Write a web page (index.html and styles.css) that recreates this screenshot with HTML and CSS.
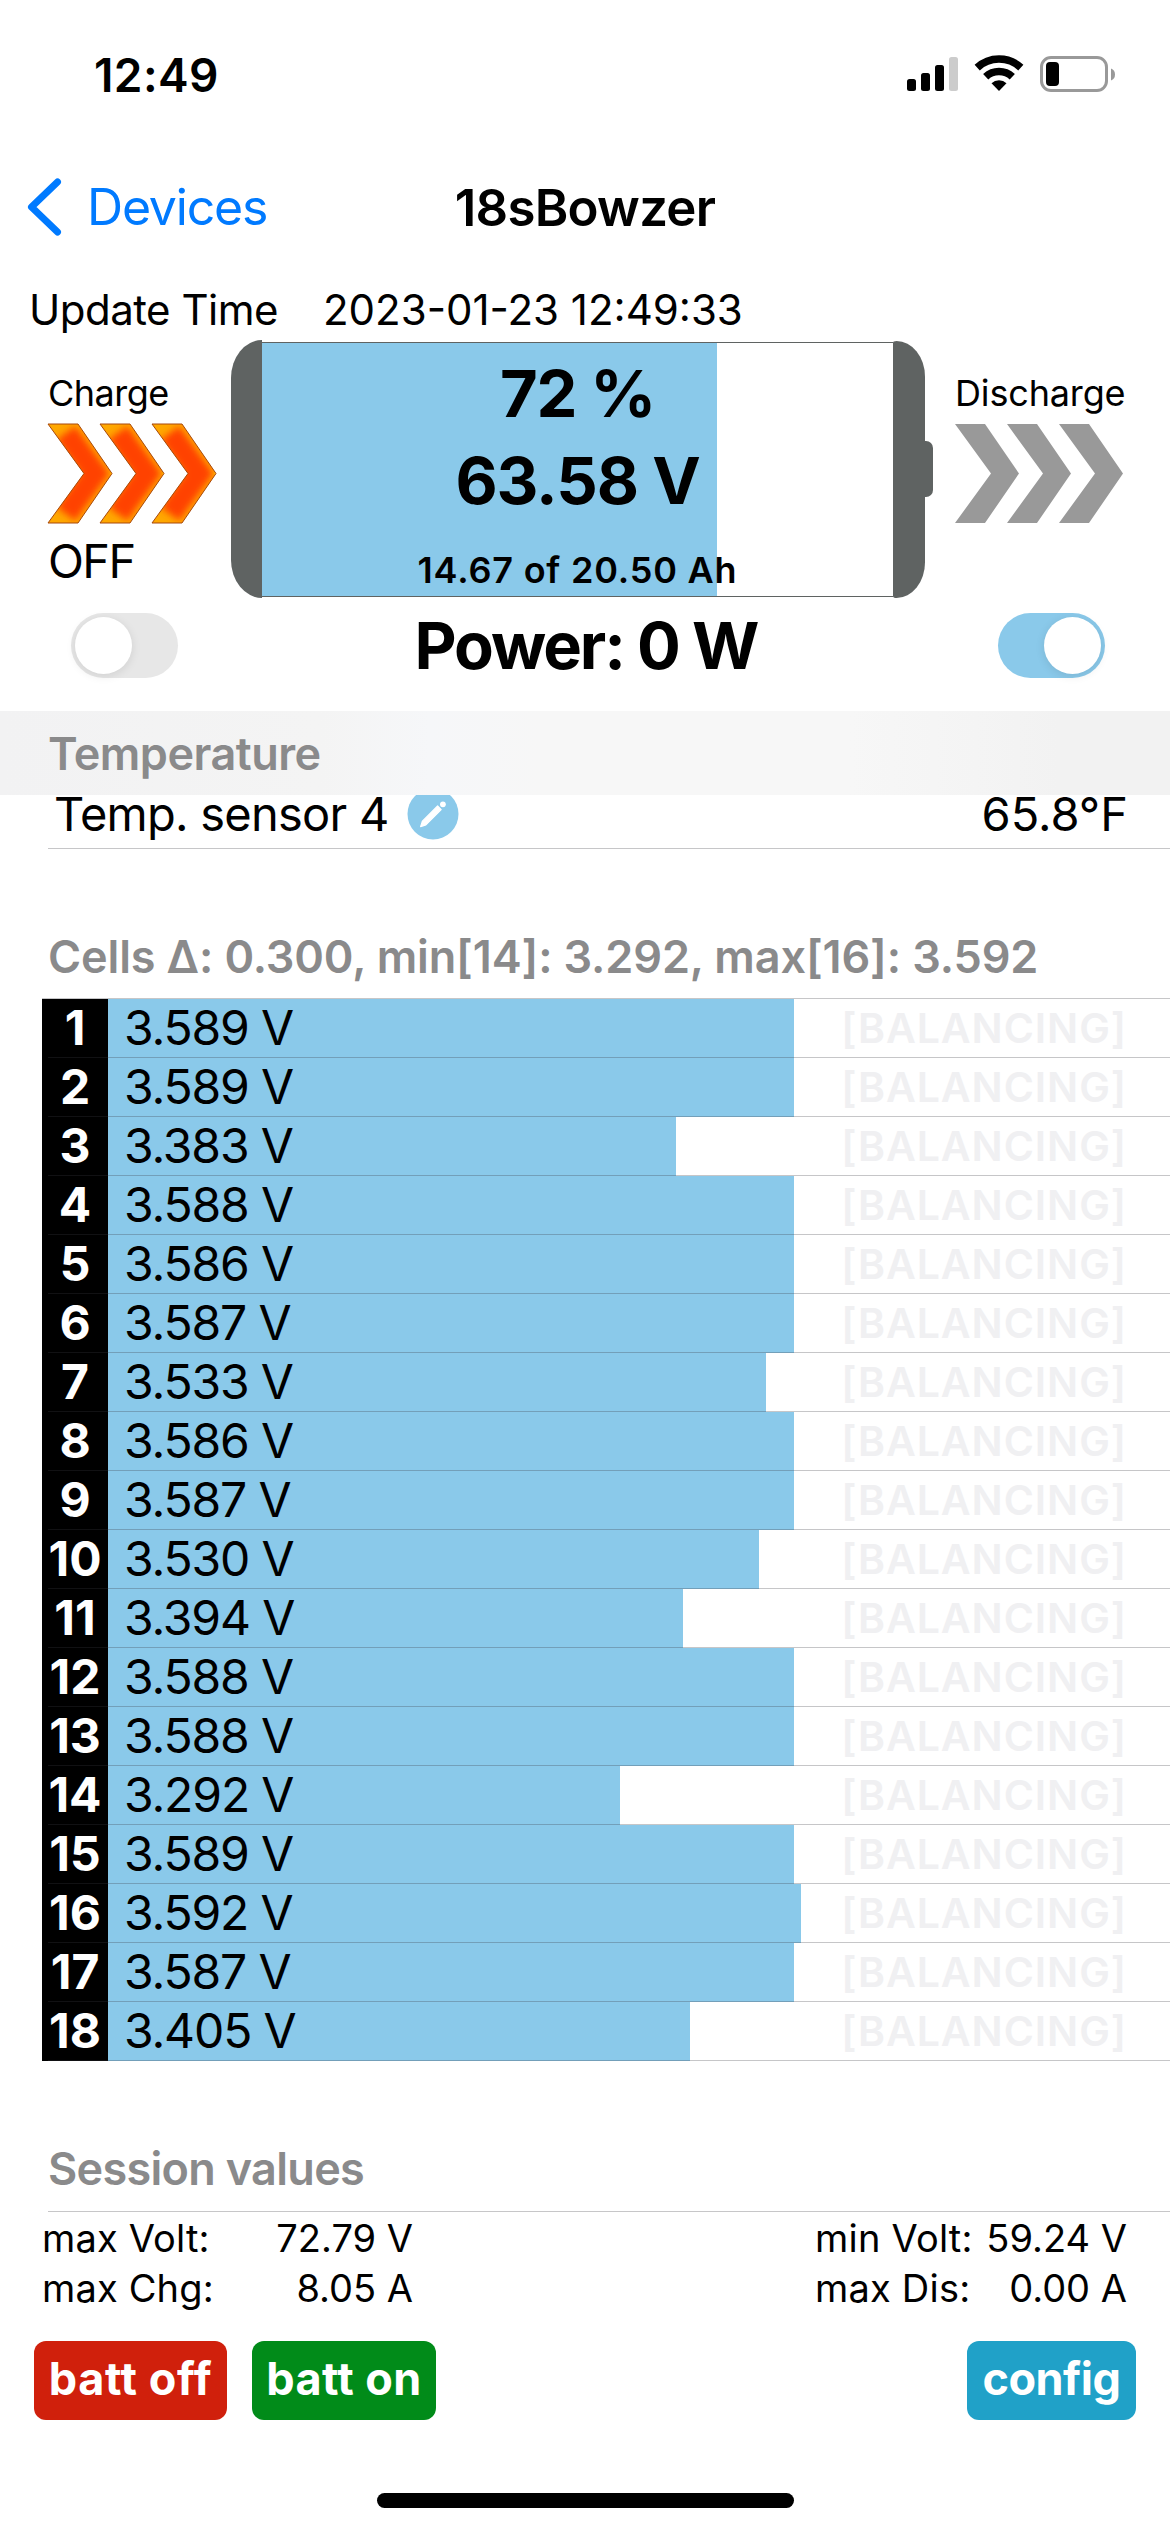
FILE: index.html
```
<!DOCTYPE html>
<html lang="en">
<head>
	<meta charset="UTF-8">
	<title>18sBowzer</title>
	<link rel="stylesheet" href="styles.css">
	<script>
		window.onload=function(){
			// [voltage, bar width]
			var cells=[
				['3.589',686],['3.589',686],['3.383',568],['3.588',686],['3.586',686],['3.587',686],
				['3.533',658],['3.586',686],['3.587',686],['3.530',651],['3.394',575],['3.588',686],
				['3.588',686],['3.292',512],['3.589',686],['3.592',693],['3.587',686],['3.405',582]
			];
			var html='';
			for(var i=0;i<cells.length;i++){
				html+='<li class="cell"><b class="num">'+(i+1)+'</b>'
					+'<span class="bar" style="width:'+cells[i][1]+'px">'+cells[i][0]+' V</span>'
					+'<span class="balancing">[BALANCING]</span></li>';
			}
			document.getElementById('cells').innerHTML=html;
		}
	</script>
</head>
<body>
	<div class="status">
		<span class="clock">12:49</span>
		<svg class="status-icons" width="220" height="50" viewBox="900 50 220 50">
			<rect x="907" y="79" width="9" height="12" rx="2.5"/>
			<rect x="921" y="73" width="9" height="18" rx="2.5"/>
			<rect x="935" y="65" width="9" height="26" rx="2.5"/>
			<rect x="949" y="57" width="9" height="34" rx="2.5" fill="#ccc"/>
			<path d="M977.2 67.6A32 32 0 0 1 1020.8 67.6M985.7 76.7A19.5 19.5 0 0 1 1012.3 76.7" fill="none" stroke="#000" stroke-width="7.6"/>
			<path d="M999 91L991.5 83.2A11 11 0 0 1 1006.5 83.2Z"/>
			<rect x="1041.5" y="57.5" width="65" height="33" rx="9.5" fill="none" stroke="#999" stroke-width="3"/>
			<rect x="1046" y="62" width="13" height="24" rx="4"/>
			<path d="M1111 68.5Q1115 70 1115 74.5Q1115 79 1111 80.5Z" fill="#999"/>
		</svg>
	</div>
	<div class="nav">
		<a href="#" class="back">
			<svg width="40" height="60" viewBox="0 0 40 60"><path d="M32.5 5L6.5 30L32.5 55" fill="none" stroke="#007aff" stroke-width="7" stroke-linecap="round" stroke-linejoin="round"/></svg>
			<span>Devices</span>
		</a>
		<h1>18sBowzer</h1>
	</div>
	<div class="update">
		<span class="update-label">Update Time</span>
		<span class="update-value">2023-01-23 12:49:33</span>
	</div>

	<div class="panel">
		<div class="flow charge">
			<span class="flow-name">Charge</span>
			<svg class="arrows" width="170" height="101" viewBox="-1 -1 170 101">
				<defs>
					<path id="arrow" d="M0 0H30L64 49.5L30 99H0L36 49.5Z"/>
					<clipPath id="clip"><use href="#arrow"/></clipPath>
					<filter id="glow" x="-50%" y="-50%" width="200%" height="200%"><feGaussianBlur stdDeviation="3.5"/></filter>
					<g id="hot">
						<use href="#arrow" fill="#ffa800"/>
						<g clip-path="url(#clip)"><path d="M18 9L47 49.5L18 90" fill="none" stroke="#ff4200" stroke-width="23" filter="url(#glow)"/></g>
						<use href="#arrow" fill="none" stroke="#a8480c" stroke-width="1"/>
					</g>
				</defs>
				<use href="#hot"/>
				<use href="#hot" x="52"/>
				<use href="#hot" x="104"/>
			</svg>
			<span class="flow-state">OFF</span>
		</div>
		<div class="battery">
			<div class="cap-left"></div>
			<div class="body">
				<div class="percent">72 %</div>
				<div class="volts">63.58 V</div>
				<div class="capacity">14.67 of 20.50 Ah</div>
			</div>
			<div class="cap-right"></div>
			<div class="nub"></div>
		</div>
		<div class="flow discharge">
			<span class="flow-name">Discharge</span>
			<svg class="arrows" width="170" height="101" viewBox="-1 -1 170 101" fill="#999">
				<use href="#arrow"/>
				<use href="#arrow" x="52"/>
				<use href="#arrow" x="104"/>
			</svg>
		</div>
	</div>

	<div class="power">
		<span class="toggle"></span>
		<strong>Power: 0 W</strong>
		<span class="toggle on"></span>
	</div>

	<h2 class="bar-title">Temperature</h2>
	<div class="temp-row">
		<span class="temp-name">Temp. sensor 4</span>
		<svg class="edit" width="52" height="52" viewBox="0 0 52 52">
			<circle cx="26" cy="26" r="25.5" fill="#8ac9ea"/>
			<path d="M13.6 38.6L15.4 33.2L30.6 18L34.2 21.6L18.9 36.9Z" fill="#fff" stroke="#fff" stroke-width="1.2" stroke-linejoin="round"/>
			<circle cx="35.9" cy="16.3" r="2.9" fill="#fff"/>
		</svg>
		<span class="temp-value">65.8°F</span>
	</div>

	<h2 class="cells-title">Cells Δ: 0.300, min[14]: 3.292, max[16]: 3.592</h2>
	<ul id="cells" class="cells"></ul>

	<h2 class="session-title">Session values</h2>
	<div class="session">
		<span>max Volt:</span><span class="val">72.79 V</span><span class="second">min Volt:</span><span class="val">59.24 V</span>
		<span>max Chg:</span><span class="val">8.05 A</span><span class="second">max Dis:</span><span class="val">0.00 A</span>
	</div>
	<div class="buttons">
		<a href="#" class="btn off">batt off</a>
		<a href="#" class="btn turn-on">batt on</a>
		<a href="#" class="btn config">config</a>
	</div>
	<div class="home"></div>
</body>
</html>
```
FILE: styles.css
```
*{
	margin: 0;
	padding: 0;
	box-sizing: border-box;
	text-decoration: none;
}
body{
	width: 1170px;
	height: 2532px;
	overflow: hidden;
	background-color: #fff;
	color: #000;
	font-family: Inter, "Liberation Sans", sans-serif;
	white-space: nowrap;
}
svg{
	display: block;
	flex: none;
}
.status{
	display: flex;
	justify-content: space-between;
	align-items: center;
	height: 149px;
	padding: 0 50px 0 94px;
}
.clock{
	font-size: 46px;
	font-weight: 600;
	letter-spacing: .4px;
}
.nav{
	display: grid;
	grid-template-columns: 1fr auto 1fr;
	align-items: center;
	height: 116px;
	padding-left: 25px;
	padding-right: 25px;
}
.back{
	display: flex;
	align-items: center;
	gap: 22px;
	font-size: 50px;
	letter-spacing: -1.2px;
	color: #007aff;
}
h1{
	font-size: 51px;
	font-weight: 600;
	letter-spacing: -.75px;
}
.update{
	display: flex;
	height: 75px;
	padding: 15px 0 0 29px;
	font-size: 42px;
	line-height: 60px;
}
.update-label{
	width: 294px;
	letter-spacing: -.5px;
}

/* charge / battery / discharge */
.panel{
	display: flex;
	height: 258px;
}
.flow{
	padding-top: 31px;
}
.flow-name{
	display: block;
	font-size: 36px;
	line-height: 44px;
	letter-spacing: -.5px;
}
.arrows{
	margin-top: 8px;
}
.charge{
	width: 231px;
	padding-left: 48px;
}
.charge .arrows, .discharge .arrows{
	margin-left: -1px;
}
.discharge{
	padding-left: 22px;
}
.discharge .flow-name{
	letter-spacing: -.15px;
}
.flow-state{
	display: block;
	margin-top: 9px;
	font-size: 47px;
	line-height: 56px;
	letter-spacing: -1.6px;
}
.battery{
	display: flex;
	width: 702px;
	align-items: center;
}
.cap-left{
	width: 31px;
	height: 258px;
	background-color: #5f6362;
	border-radius: 31px 0 0 31px / 38px 0 0 38px;
}
.cap-right{
	width: 32px;
	height: 257px;
	background-color: #5f6362;
	border-radius: 4px 32px 32px 4px / 2px 40px 40px 2px;
}
.nub{
	width: 8px;
	height: 56px;
	background-color: #5f6362;
	border-radius: 0 7px 7px 0;
}
.body{
	width: 631px;
	height: 255px;
	padding-top: 8px;
	border: 1px solid #5f6362;
	border-width: 1px 0;
	background: linear-gradient(to right, #8ac9ea 455px, #fff 455px);
	font-weight: 700;
	text-align: center;
}
.percent{
	font-size: 65px;
	line-height: 86px;
	letter-spacing: -1.3px;
}
.volts{
	font-size: 65px;
	line-height: 87px;
	letter-spacing: -1.1px;
}
.capacity{
	margin-top: 24px;
	font-size: 36px;
	font-weight: 600;
	line-height: 44px;
	letter-spacing: .8px;
}
.power{
	display: flex;
	justify-content: space-between;
	height: 113px;
	padding: 15px 65px 0 71px;
}
.power strong{
	margin-right: 4px;
	font-size: 65px;
	line-height: 65px;
	letter-spacing: -2.1px;
}
.toggle{
	width: 107px;
	height: 65px;
	padding: 4px;
	border-radius: 33px;
	background-color: #e7e7e7;
}
.toggle:before{
	content: "";
	display: block;
	width: 57px;
	height: 57px;
	border-radius: 50%;
	background-color: #fff;
	box-shadow: 0 2px 10px rgba(0,0,0,.1);
}
.toggle.on{
	background-color: #8ac9ea;
}
.toggle.on:before{
	margin-left: auto;
}

/* lists */
h2{
	padding-left: 48px;
	font-size: 45px;
	font-weight: 600;
	color: #8a8a8b;
}
.bar-title{
	position: relative;
	z-index: 1;
	height: 84px;
	line-height: 85px;
	letter-spacing: -.5px;
	background: linear-gradient(to right, #f2f2f3 0, #f4f4f4 320px, #f6f7f9 430px, #f7f7f7 540px, #f7f7f7 850px, #f2f2f2 1060px);
}
.temp-row{
	display: flex;
	align-items: center;
	height: 54px;
	margin-left: 48px;
	padding: 0 42px 15px 6px;
	border-bottom: 1px solid #c6c6c8;
	font-size: 47px;
	line-height: 38px;
}
.temp-name{
	letter-spacing: -.75px;
}
.edit{
	margin-left: 18px;
}
.temp-value{
	margin-left: auto;
}
.cells-title{
	height: 149px;
	padding-top: 78px;
	line-height: 60px;
	letter-spacing: -.13px;
}
.cells{
	margin-left: 42px;
	border-top: 1px solid #c6c6c8;
	list-style: none;
}
.cell{
	position: relative;
	display: flex;
	height: 59px;
	line-height: 58px;
	font-size: 48px;
}
/* separator runs over the number and the bar */
.cell:after{
	content: "";
	position: absolute;
	left: 6px;
	right: 0;
	bottom: 0;
	height: 1px;
	background-color: rgba(60,60,67,.29);
}
.num{
	width: 66px;
	background-color: #000;
	color: #fff;
	text-align: center;
}
.bar{
	padding-left: 16px;
	background-color: #8ac9ea;
	letter-spacing: -1.14px;
}
.balancing{
	margin-left: auto;
	padding-right: 43px;
	font-size: 41px;
	font-weight: 600;
	letter-spacing: .93px;
	color: #f0f0f2;
}
.session-title{
	height: 150px;
	padding-top: 78px;
	line-height: 60px;
	letter-spacing: -.7px;
}
.session{
	display: grid;
	grid-template-columns: 200px 165px 567px 147px;
	grid-auto-rows: 50px;
	height: 130px;
	margin-left: 48px;
	padding-top: 1px;
	border-top: 1px solid #c6c6c8;
	font-size: 38px;
	line-height: 50px;
}
.session span:nth-child(4n+1){
	margin-left: -6px;
	letter-spacing: .15px;
}
.session .second{
	padding-left: 402px;
	letter-spacing: .2px;
}
.session .val{
	text-align: right;
}
.buttons{
	display: flex;
	gap: 25px;
	padding: 0 34px;
}
.btn{
	height: 79px;
	border-radius: 12px;
	font-size: 45px;
	font-weight: 700;
	line-height: 76px;
	text-align: center;
	color: #fff;
}
.off{
	width: 193px;
	letter-spacing: .6px;
	background-color: #d0200c;
}
.turn-on{
	width: 184px;
	letter-spacing: .4px;
	background-color: #018b19;
}
.config{
	width: 169px;
	margin-left: auto;
	letter-spacing: -.5px;
	background-color: #20a1c8;
}
.home{
	width: 417px;
	height: 15px;
	margin: 73px auto 0;
	border-radius: 8px;
	background-color: #000;
}
```
